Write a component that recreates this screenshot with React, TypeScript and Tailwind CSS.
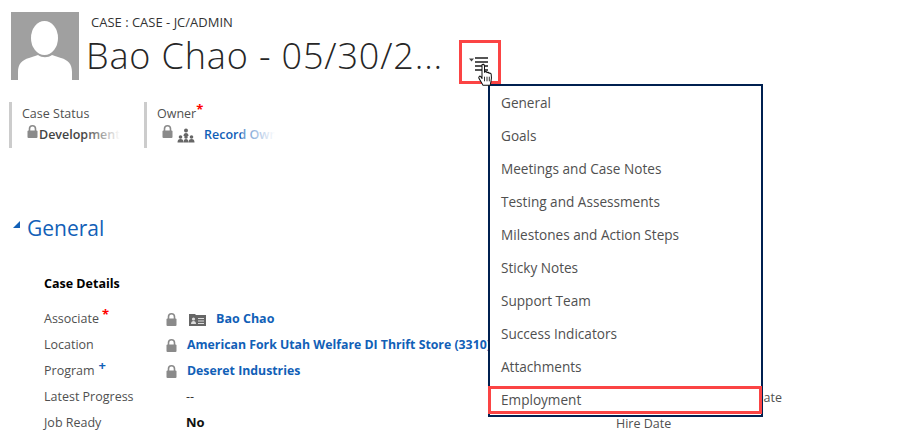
const MENU_ITEMS = ['General', 'Goals', 'Meetings and Case Notes', 'Testing and Assessments', 'Milestones and Action Steps', 'Sticky Notes', 'Support Team', 'Success Indicators', 'Attachments', 'Employment'];

function LockIcon({ className = '' }: { className?: string }) {
  return (
    <svg viewBox="0 0 11 13" className={`h-[13px] w-[11px] shrink-0 ${className}`}>
      <path d="M2.5 6V3.8a3 3 0 0 1 6 0V6" fill="none" stroke="#8a8a8a" strokeWidth="1.6" />
      <rect x="0.5" y="5.5" width="10" height="7.5" rx="1" fill="#8a8a8a" />
    </svg>
  );
}

function Avatar() {
  return (
    <svg viewBox="0 0 68 68" className="h-[68px] w-[68px] shrink-0">
      <rect width="68" height="68" fill="#a0a0a0" />
      <ellipse cx="33.500" cy="26" rx="13.500" ry="17" fill="#fff" />
      <path d="M7 68V60c0-8 4-12 11-14l9-3c4 3 10 3 14 0l9 3c7 2 11 6 11 14v8z" fill="#fff" />
    </svg>
  );
}

function TeamIcon() {
  return (
    <svg viewBox="0 0 18 15" className="h-[15px] w-[18px] shrink-0" fill="#666">
      <circle cx="9" cy="2.500" r="2" />
      <path d="M6.500 8c0-2 1-3 2.500-3s2.500 1 2.500 3z" />
      <circle cx="3.500" cy="9" r="1.800" />
      <path d="M0.500 14.500c0-2.500 1-3.500 3-3.500s3 1 3 3.500z" />
      <circle cx="9" cy="9" r="1.800" />
      <path d="M6.500 14.500c0-2.500 1-3.500 2.500-3.500s2.500 1 2.500 3.500z" />
      <circle cx="14.500" cy="9" r="1.800" />
      <path d="M11.500 14.500c0-2.500 1-3.500 3-3.500s3 1 3 3.500z" />
    </svg>
  );
}

function ContactIcon() {
  return (
    <svg viewBox="0 0 17 13" className="h-[13px] w-[17px] shrink-0">
      <path d="M0 1h6l1 1h10v11H0z" fill="#666" />
      <circle cx="4.500" cy="6" r="1.600" fill="#ddd" />
      <path d="M2 11c0-2 1-3 2.500-3S7 9 7 11z" fill="#ddd" />
      <path d="M9 5.500h6M9 8h6M9 10.500h6" stroke="#ddd" strokeWidth="1" />
    </svg>
  );
}

function MenuGlyph() {
  return (
    <svg viewBox="0 0 20 14" className="h-[14px] w-[20px]">
      <path d="M0 1.500h5L2.500 4.500z" fill="#444" />
      <path d="M6 1h13M6 5h13M6 9h13M6 13h13" stroke="#555" strokeWidth="2" />
    </svg>
  );
}

function HandCursor() {
  return (
    <svg viewBox="0 0 17 21" preserveAspectRatio="none" className="h-[24px] w-[17px]">
      <path d="M5 1.500c1-.8 2.300-.3 2.500 1V8l.5-.3c1-.4 1.700 0 2 .7.800-.5 1.800-.2 2 .6.900-.4 2 0 2.200 1 .4 2 .3 4-.2 6l-.8 3.500H6l-4-6c-.8-1.300.6-2.500 1.800-1.600L5 13.500V2.500z" fill="#fff" stroke="#111" strokeWidth="1" strokeLinejoin="round" />
      <path d="M7.500 12v4M10 12v4M12.300 12v4" stroke="#111" strokeWidth=".8" />
    </svg>
  );
}

function Field({ label, mark, children }: { label: string; mark?: 'req' | 'rec'; children: React.ReactNode }) {
  return (
    <div className="flex h-[26px] items-center">
      <div className="w-[122px] text-[12.500px] text-[#505050]">
        {label}
        {mark === 'req' && <span className="relative -top-[4px] ml-[3px] text-[13px] font-bold leading-none text-[#f00]">*</span>}
        {mark === 'rec' && <span className="relative -top-[5px] ml-[4px] text-[13px] font-bold leading-none text-[#1160b7]">+</span>}
      </div>
      {children}
    </div>
  );
}

export default function App() {
  return (
    <div className="relative h-[436px] w-[898px] overflow-hidden bg-white font-['Open_Sans','Noto_Sans',sans-serif]">
      <div className="flex pl-[11px] pt-[12px]">
        <Avatar />
        <div className="ml-[7px]">
          <div className="ml-[5px] -mt-[1px] text-[13px] leading-[23px] text-[#333]">CASE : CASE - JC/ADMIN</div>
          <div className="-mt-[1px] text-[36px] font-light leading-[46px] tracking-[0.85px] text-[#262626]">Bao Chao - 05/30/2...</div>
        </div>
        <button type="button" className="ml-[16px] mt-[28px] flex h-[44px] w-[42px] items-start justify-start border-[3px] border-[#fb4444] pl-[7px] pt-[14px]">
          <MenuGlyph />
        </button>
      </div>

      <div className="mt-[18px] flex pl-[9px]">
        <div className="h-[46px] w-[135px] border-l-[3px] border-[#ccc] pl-[10px]">
          <div className="pt-[2px] text-[12.500px] leading-[20px] text-[#505050]">Case Status</div>
          <div className="mt-[1px] flex items-start pl-[5px]">
            <LockIcon />
            <div className="relative ml-[1px] w-[81px] overflow-hidden whitespace-nowrap text-[12.500px] font-semibold leading-[20px] text-[#444]">
              Development
              <div className="absolute inset-y-0 right-0 w-[36px] bg-gradient-to-r from-transparent to-white" />
            </div>
          </div>
        </div>
        <div className="h-[46px] border-l-[3px] border-[#ccc] pl-[10px]">
          <div className="pt-[2px] text-[12.500px] leading-[20px] text-[#505050]">
            Owner<span className="relative -top-[4px] text-[13px] font-bold leading-none text-[#f00]">*</span>
          </div>
          <div className="mt-[1px] flex items-start pl-[5px]">
            <LockIcon />
            <div className="ml-[4px] mt-[3px]"><TeamIcon /></div>
            <div className="relative ml-[9px] w-[71px] overflow-hidden whitespace-nowrap text-[12.500px] font-semibold leading-[20px] text-[#1160b7]">
              Record Owner
              <div className="absolute inset-y-0 right-0 w-[34px] bg-gradient-to-r from-white/30 to-white" />
            </div>
          </div>
        </div>
      </div>

      <div className="mt-[64px] flex items-center pl-[13px]">
        <div className="-mt-[8px] h-0 w-0 border-b-[7px] border-l-[7px] border-b-[#1160b7] border-l-transparent" />
        <div className="ml-[7px] text-[21px] leading-[32px] text-[#1160b7]">General</div>
      </div>

      <div className="mt-[27px] flex pl-[44px]">
        <div className="w-[572px] shrink-0">
          <div className="mb-[9px] h-[26px] text-[12.500px] font-bold leading-[26px] text-black">Case Details</div>
          <Field label="Associate" mark="req">
            <LockIcon />
            <div className="ml-[12px]"><ContactIcon /></div>
            <div className="ml-[10px] text-[12.500px] font-bold text-[#1160b7]">Bao Chao</div>
          </Field>
          <Field label="Location">
            <LockIcon />
            <div className="ml-[10px] whitespace-nowrap text-[12.300px] font-bold text-[#1160b7]">American Fork Utah Welfare DI Thrift Store (3310)</div>
          </Field>
          <Field label="Program" mark="rec">
            <LockIcon />
            <div className="ml-[10px] text-[12.300px] font-bold text-[#1160b7]">Deseret Industries</div>
          </Field>
          <Field label="Latest Progress">
            <div className="ml-[20px] text-[12.500px] text-[#333]">--</div>
          </Field>
          <Field label="Job Ready">
            <div className="ml-[20px] text-[13px] font-bold text-[#111]">No</div>
          </Field>
        </div>
        <div className="pt-[114px] text-[12.500px] text-[#505050]">
          <div className="h-[26px] whitespace-nowrap leading-[26px]">Estimated Employment Date</div>
          <div className="h-[26px] leading-[26px]">Hire Date</div>
        </div>
      </div>

      <div className="absolute left-[488px] top-[84px] h-[333px] w-[275px] border-2 border-[#002050] bg-white">
        {MENU_ITEMS.map((item) => (
          <div key={item} className="h-[33px] pl-[11px] text-[13.600px] leading-[33px] text-[#505050]">{item}</div>
        ))}
      </div>
      <div className="absolute left-[488px] top-[386px] h-[28px] w-[274px] border-[3px] border-[#fb4444]" />
      <div className="absolute left-[477px] top-[63px]"><HandCursor /></div>
    </div>
  );
}
